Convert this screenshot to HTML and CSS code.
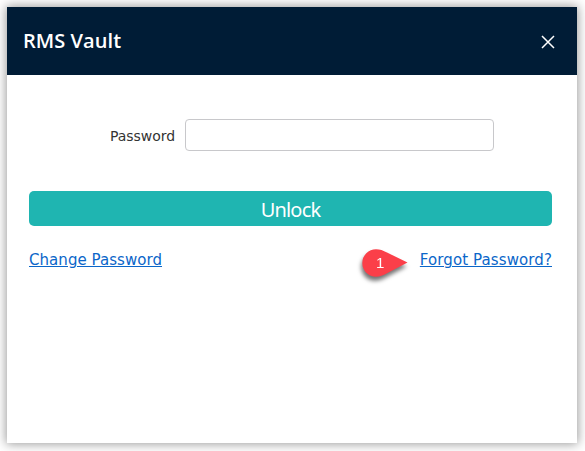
FILE: index.html
```html
<!DOCTYPE html>
<html lang="en">
<head>
    <meta charset="UTF-8">
    <meta name="viewport" content="width=device-width, initial-scale=1.0">
    <title>RMS Vault</title>
    <link rel="stylesheet" href="styles.css">
</head>
<body>
    <div class="vault-dialog">
        <div class="vault-header">
            <h1>RMS Vault</h1>
            <button type="button" class="close-button" aria-label="Close">
                <svg width="14" height="14" viewBox="0 0 14 14">
                    <path d="M1 1L13 13M13 1L1 13" fill="none" stroke="#fff" stroke-width="1.5"/>
                </svg>
            </button>
        </div>

        <form class="vault-form">
            <div class="form-group">
                <label for="password">Password</label>
                <input type="password" id="password" name="password">
            </div>
            <button type="submit" class="unlock-button">Unlock</button>
            <div class="vault-links">
                <a href="#" class="change-link">Change Password</a>
                <div class="forgot">
                    <a href="#" class="forgot-link">Forgot Password?</a>
                    <!-- Step marker -->
                    <div class="marker">
                        <svg width="46" height="28" viewBox="0 0 46 28">
                            <path d="M14 0.3C18 0.3 21 1.5 25 3.6L45.5 13.6L25 24.2C21 26.4 18 27.7 14 27.7A13.7 13.7 0 0 1 14 0.3Z" fill="#fb3f49"/>
                        </svg>
                        <span>1</span>
                    </div>
                </div>
            </div>
        </form>
    </div>
</body>
</html>
```

FILE: styles.css
```css
* {
    box-sizing: border-box;
}

body {
    margin: 0;
    padding: 7px 8px 8px 7px;
    height: 451px;
    overflow: hidden;
    background-color: #fff;
    font-family: "DejaVu Sans", Verdana, sans-serif;
}

.vault-dialog {
    width: 570px;
    height: 436px;
    background-color: #fff;
    box-shadow: 0 0 10px 1px rgba(0, 0, 0, 0.4);
}

.vault-header {
    display: flex;
    justify-content: space-between;
    align-items: center;
    height: 68px;
    padding: 0 22px 0 16px;
    background-color: #001c36;
}

h1 {
    margin: 0;
    color: #fff;
    font-family: "Open Sans", sans-serif;
    font-size: 20px;
    font-weight: 650;
    line-height: 28px;
    letter-spacing: 0.05px;
}

.close-button {
    display: flex;
    margin-top: 2px;
    padding: 0;
    border: none;
    background: none;
    cursor: pointer;
}

.vault-form {
    padding: 44px 25px 0 22px;
}

.form-group {
    display: flex;
    align-items: center;
    gap: 10px;
    margin-left: 81px;
}

label {
    width: 65px;
    padding-top: 1px;
    color: #333;
    font-size: 14px;
    letter-spacing: -0.05px;
    white-space: nowrap;
}

input {
    width: 309px;
    height: 32px;
    border: 1px solid #c8c8cb;
    border-radius: 4px;
    background-color: #fff;
}

.unlock-button {
    display: block;
    width: 100%;
    height: 35px;
    margin-top: 40px;
    padding: 2px 0 0;
    border: none;
    border-radius: 5px;
    background-color: #1fb5b1;
    color: #fff;
    font-family: "Noto Sans", sans-serif;
    font-size: 20px;
    line-height: 30px;
    letter-spacing: -0.8px;
    cursor: pointer;
}

.vault-links {
    display: flex;
    justify-content: space-between;
    margin-top: 24px;
    font-size: 15px;
    line-height: 20px;
}

.vault-links a {
    color: #0b66c9;
    text-decoration: underline;
    white-space: nowrap;
}

.change-link {
    letter-spacing: 0.05px;
}

.forgot-link {
    letter-spacing: 0.1px;
}

.forgot {
    position: relative;
}

.marker {
    position: absolute;
    top: -1px;
    right: 144px;
    width: 46px;
    height: 28px;
    filter: drop-shadow(-1px 4px 2px rgba(0, 0, 0, 0.55));
}

.marker svg {
    display: block;
}

.marker span {
    position: absolute;
    top: 4px;
    left: 14px;
    color: #fff;
    font-family: "Liberation Sans", sans-serif;
    font-size: 15px;
    letter-spacing: 0;
}
```
